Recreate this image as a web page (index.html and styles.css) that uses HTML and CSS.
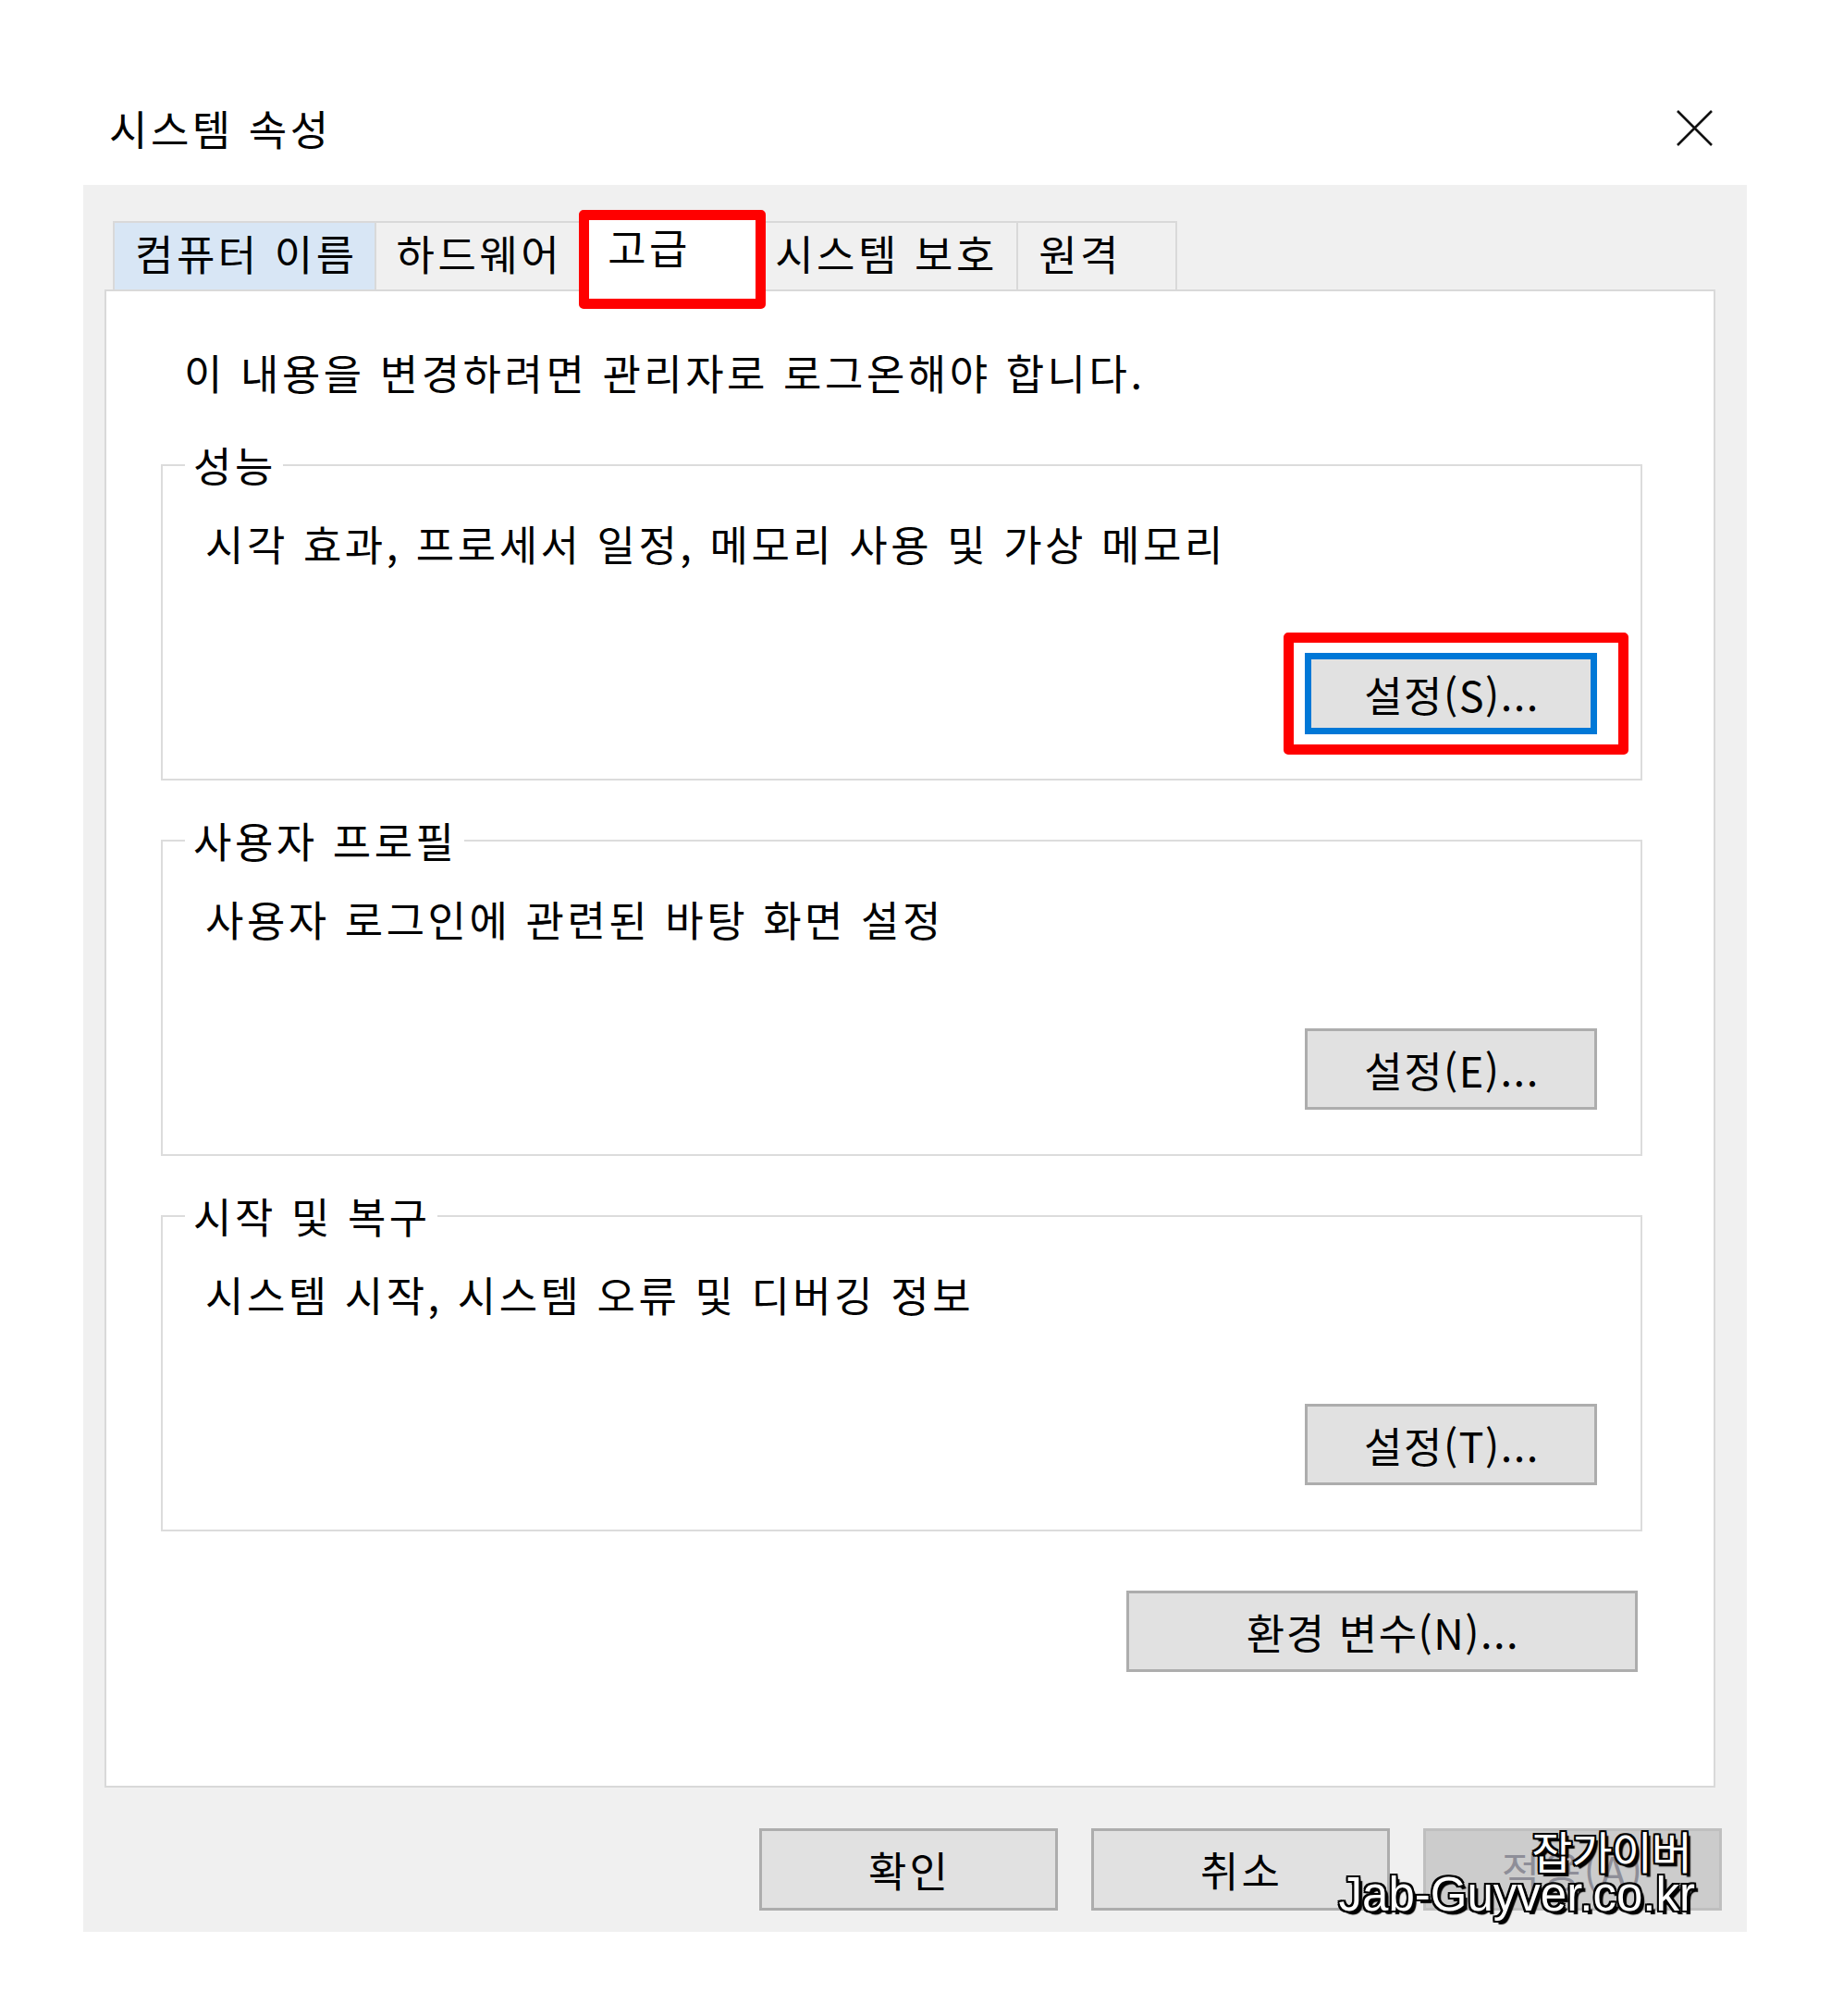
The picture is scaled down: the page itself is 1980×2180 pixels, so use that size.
FILE: index.html
```html
<!DOCTYPE html>
<html lang="ko">
<head>
    <meta charset="UTF-8">
    <title>시스템 속성</title>
    <link rel="stylesheet" href="styles.css">
</head>
<body>
    <div class="dialog">
        <header class="titlebar">
            <span class="title">시스템 속성</span>
            <svg class="close" viewBox="0 0 41 41" aria-label="닫기">
                <path d="M2 2 L39 39 M39 2 L2 39" stroke="#111" stroke-width="2.6" fill="none"/>
            </svg>
        </header>

        <div class="window">
            <div class="tabs">
                <div class="tab hover">컴퓨터 이름</div>
                <div class="tab">하드웨어</div>
                <div class="tab active">고급</div>
                <div class="tab protect">시스템 보호</div>
                <div class="tab last">원격</div>
            </div>

            <div class="panel">
                <p class="notice">이 내용을 변경하려면 관리자로 로그온해야 합니다.</p>

                <fieldset class="group">
                    <legend>성능</legend>
                    <div class="group-body">
                        <p>시각 효과, 프로세서 일정, 메모리 사용 및 가상 메모리</p>
                        <div class="group-actions">
                            <button class="btn focused marked">설정(S)...</button>
                        </div>
                    </div>
                </fieldset>

                <fieldset class="group">
                    <legend>사용자 프로필</legend>
                    <div class="group-body">
                        <p>사용자 로그인에 관련된 바탕 화면 설정</p>
                        <div class="group-actions">
                            <button class="btn">설정(E)...</button>
                        </div>
                    </div>
                </fieldset>

                <fieldset class="group">
                    <legend>시작 및 복구</legend>
                    <div class="group-body">
                        <p>시스템 시작, 시스템 오류 및 디버깅 정보</p>
                        <div class="group-actions">
                            <button class="btn">설정(T)...</button>
                        </div>
                    </div>
                </fieldset>

                <div class="panel-actions">
                    <button class="btn wide">환경 변수(N)...</button>
                </div>
            </div>

            <div class="footer">
                <button class="btn footer-btn">확인</button>
                <button class="btn footer-btn">취소</button>
                <button class="btn footer-btn" disabled>적용(A)</button>
            </div>
        </div>

        <!-- watermark over the bottom right corner -->
        <div class="watermark">
            <div class="wm-ko">잡가이버</div>
            <div class="wm-en">Jab-Guyver.co.kr</div>
        </div>
    </div>
</body>
</html>
```

FILE: styles.css
```css
* {
    box-sizing: border-box;
}

body {
    margin: 0;
    background: #fff;
    color: #000;
    font-family: "Noto Sans CJK KR", "Noto Sans", sans-serif;
    font-size: 45px;
    letter-spacing: 3.5px;
}

.dialog {
    position: relative;
    width: 1799px;
    margin-left: 90px;
}

.titlebar {
    height: 200px;
    padding: 109px 36px 0 28px;
    display: flex;
    justify-content: space-between;
    align-items: flex-start;
}

.title {
    line-height: 60px;
}

.close {
    width: 41px;
    height: 41px;
    margin-top: 9px;
}

.window {
    background: #f0f0f0;
    padding: 27px 27px 23px 23px;
}

/* tabs */
.tabs {
    display: flex;
    align-items: flex-end;
    margin-left: 9px;
}

.tab {
    height: 74px;
    line-height: 66px;
    padding: 0 18px 0 22px;
    border: 2px solid #d9d9d9;
    border-right: none;
    border-bottom: none;
    background: #f0f0f0;
    white-space: nowrap;
}

.tab.hover {
    background: #d8e6f5;
}

.tab.last {
    width: 174px;
    border-right: 2px solid #d9d9d9;
}

.tab.active {
    position: relative;
    z-index: 1;
    width: 202px;
    height: 107px;
    margin-bottom: -21px;
    padding: 0 0 0 20px;
    line-height: 58px;
    background: #fff;
    border: 11px solid #ff0000;
    border-radius: 5px;
}

.tab.protect {
    width: 271px;
    padding-left: 10px;
    border-left: none;
}

/* panel */
.panel {
    height: 1620px;
    margin-right: 7px;
    padding: 58px 77px 0 59px;
    background: #fff;
    border: 2px solid #d9d9d9;
}

.notice {
    margin: 0 0 0 25px;
    line-height: 60px;
}

.group {
    margin: 35px 0 0;
    padding: 0;
    min-width: 0;
    border: 2px solid #dcdcdc;
}

.notice + .group {
    margin-top: 40px;
}

.group legend {
    margin-left: 24px;
    padding: 0 7px 0 9px;
    line-height: 60px;
}

.group-body {
    padding: 25px 47px 48px 46px;
}

.group-body p {
    margin: 0;
    line-height: 60px;
}

.group-actions {
    display: flex;
    justify-content: flex-end;
    margin-top: 88px;
}

.panel-actions {
    display: flex;
    justify-content: flex-end;
    margin-top: 64px;
    padding-right: 5px;
}

/* buttons */
.btn {
    width: 316px;
    height: 88px;
    padding: 0 0 0 2px;
    font: inherit;
    letter-spacing: 1.5px;
    color: #000;
    background: #e1e1e1;
    border: 3px solid #adadad;
}

.btn.focused {
    border: 7px solid #0078d7;
}

.btn.marked {
    position: relative;
}

.btn.marked::after {
    content: "";
    position: absolute;
    top: -29px;
    bottom: -29px;
    left: -30px;
    right: -41px;
    border: 11px solid #ff0000;
    border-radius: 5px;
}

.btn.wide {
    width: 553px;
}

.footer {
    display: flex;
    justify-content: flex-end;
    gap: 36px;
    margin-top: 44px;
}

.footer-btn {
    width: 323px;
    height: 89px;
    letter-spacing: 3px;
}

.footer-btn:disabled {
    background: #cccccc;
    border-color: #bfbfbf;
    color: #8e8e98;
}

/* watermark */
.watermark {
    position: absolute;
    right: 56px;
    bottom: 16px;
    text-align: right;
    color: #fff;
    letter-spacing: 0;
    text-shadow:
        -2px -2px 0 #000, 2px -2px 0 #000,
        -2px 2px 0 #000, 2px 2px 0 #000,
        0 -2px 0 #000, 0 2px 0 #000,
        -2px 0 0 #000, 2px 0 0 #000,
        4px 4px 1px #000;
}

.wm-ko {
    font-size: 48px;
    line-height: 50px;
    letter-spacing: -1px;
    margin-right: 4px;
}

.wm-en {
    font-family: "Liberation Sans", Arial, sans-serif;
    font-size: 51px;
    line-height: 48px;
}
```
